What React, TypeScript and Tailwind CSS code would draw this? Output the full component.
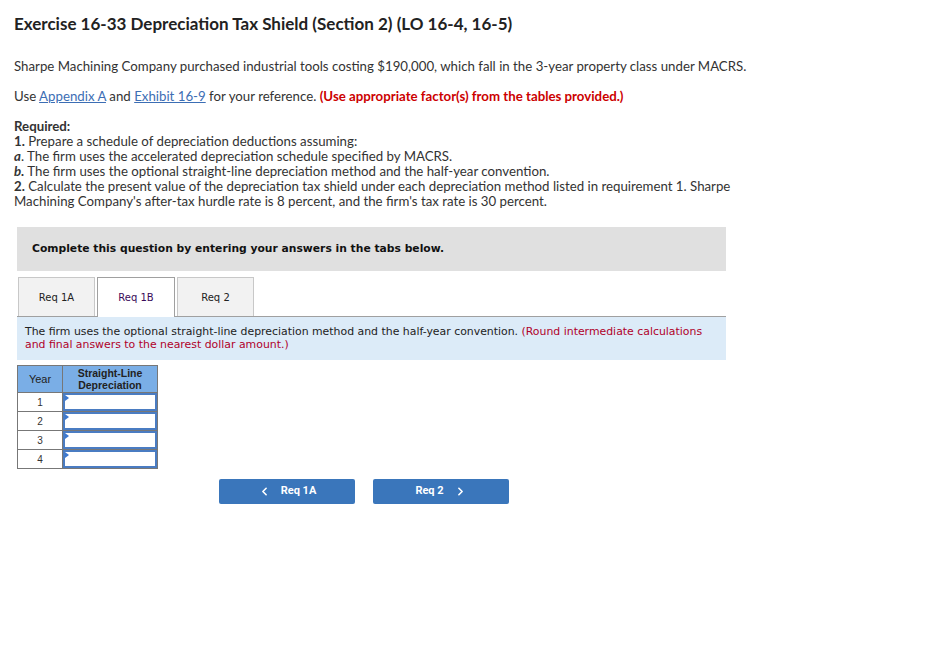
import { ChevronLeft, ChevronRight } from "lucide-react";

const bodyFont = { fontFamily: "Lato, 'Liberation Sans', sans-serif" };

export default function App() {
  const tabs = ["Req 1A", "Req 1B", "Req 2"];
  const active = 1;

  return (
    <div className="w-[927px] h-[655px] bg-white text-[#333] px-[14px] pt-[13px]" style={bodyFont}>
      {/* Title */}
      <h1 className="text-[17px] font-bold text-[#222] leading-[22px]">
        Exercise 16-33 Depreciation Tax Shield (Section 2) (LO 16-4, 16-5)
      </h1>

      <p className="mt-[21px] text-[13.25px] leading-[20px]">
        Sharpe Machining Company purchased industrial tools costing $190,000, which fall in the 3-year property class under MACRS.
      </p>
      <p className="mt-[10px] text-[13.25px] leading-[20px]">
        Use <a className="text-[#3c6eb4] underline">Appendix A</a> and{" "}
        <a className="text-[#3c6eb4] underline">Exhibit 16-9</a> for your reference.{" "}
        <span className="font-bold text-[#c00]">(Use appropriate factor(s) from the tables provided.)</span>
      </p>

      {/* Required */}
      <div className="mt-[13px] text-[13.25px] leading-[15px]">
        <p className="font-bold">Required:</p>
        <p><b>1.</b> Prepare a schedule of depreciation deductions assuming:</p>
        <p><b><i>a</i></b>. The firm uses the accelerated depreciation schedule specified by MACRS.</p>
        <p><b><i>b.</i></b> The firm uses the optional straight-line depreciation method and the half-year convention.</p>
        <p className="w-[730px]">
          <b>2.</b> Calculate the present value of the depreciation tax shield under each depreciation method listed in requirement 1. Sharpe Machining Company's after-tax hurdle rate is 8 percent, and the firm's tax rate is 30 percent.
        </p>
      </div>

      <div className="ml-[3px] w-[709px] mt-[18px]" style={{ fontFamily: "'DejaVu Sans', Verdana, sans-serif" }}>
        {/* Instruction box */}
        <div className="h-[44px] bg-[#e0e0e0] flex items-center px-[15px] text-[10.75px] font-bold text-[#111]">
          Complete this question by entering your answers in the tabs below.
        </div>

        {/* Tabs */}
        <div className="mt-[6px] flex pl-[1px] gap-[1px] relative z-10">
          {tabs.map((t, i) => (
            <div
              key={t}
              className={
                i === active
                  ? "w-[78px] h-[40px] border border-b-0 border-[#a0a0a0] bg-white flex items-center justify-center text-[10px] text-[#3a0a5a] mx-[1px]"
                  : "w-[77px] h-[39px] border border-b-0 border-[#c8c8c8] bg-[#f2f2f2] flex items-center justify-center text-[10px] text-[#222]"
              }
            >
              {t}
            </div>
          ))}
        </div>

        {/* Info */}
        <div className="-mt-[1px] border-t border-[#a0a0a0] bg-[#dcebf8] h-[44px] px-[8px] pt-[8px] text-[10.9px] leading-[13px] text-[#222]">
          The firm uses the optional straight-line depreciation method and the half-year convention.{" "}
          <span className="text-[#b0002a]">(Round intermediate calculations and final answers to the nearest dollar amount.)</span>
        </div>

        {/* Table */}
        <table className="mt-[5px] border-collapse text-[10.5px]" style={{ fontFamily: "Arial, 'Liberation Sans', sans-serif" }}>
          <thead>
            <tr className="h-[27px] bg-[#7aaee6] text-[#222]">
              <th className="w-[45px] border border-[#777] font-normal text-[11px]">Year</th>
              <th className="w-[95px] border border-[#777] font-bold text-[10.5px] leading-[12px]">
                Straight-Line
                <br />
                Depreciation
              </th>
            </tr>
          </thead>
          <tbody>
            {[1, 2, 3, 4].map((y) => (
              <tr key={y} className="h-[19px]">
                <td className="border border-[#777] text-center text-[10px]">{y}</td>
                <td className="border border-[#777] p-0">
                  <div className="relative h-[18px] border-2 border-[#4a7cc2] bg-white">
                    <span className="absolute left-0 top-0 w-0 h-0 border-t-[3px] border-b-[3px] border-l-[4px] border-t-transparent border-b-transparent border-l-[#3c78d0]" />
                  </div>
                </td>
              </tr>
            ))}
          </tbody>
        </table>

        {/* Nav buttons */}
        <div className="mt-[10px] ml-[202px] flex gap-[18px]" style={{ fontFamily: "Roboto, Arial, sans-serif" }}>
          <button className="w-[136px] h-[25px] bg-[#3a76bb] rounded-[2px] text-white text-[11px] font-bold flex items-center justify-center gap-[10px]">
            <ChevronLeft size={13} strokeWidth={3} />
            Req 1A
          </button>
          <button className="w-[136px] h-[25px] bg-[#3a76bb] rounded-[2px] text-white text-[11px] font-bold flex items-center justify-center gap-[10px]">
            Req 2
            <ChevronRight size={13} strokeWidth={3} />
          </button>
        </div>
      </div>
    </div>
  );
}
